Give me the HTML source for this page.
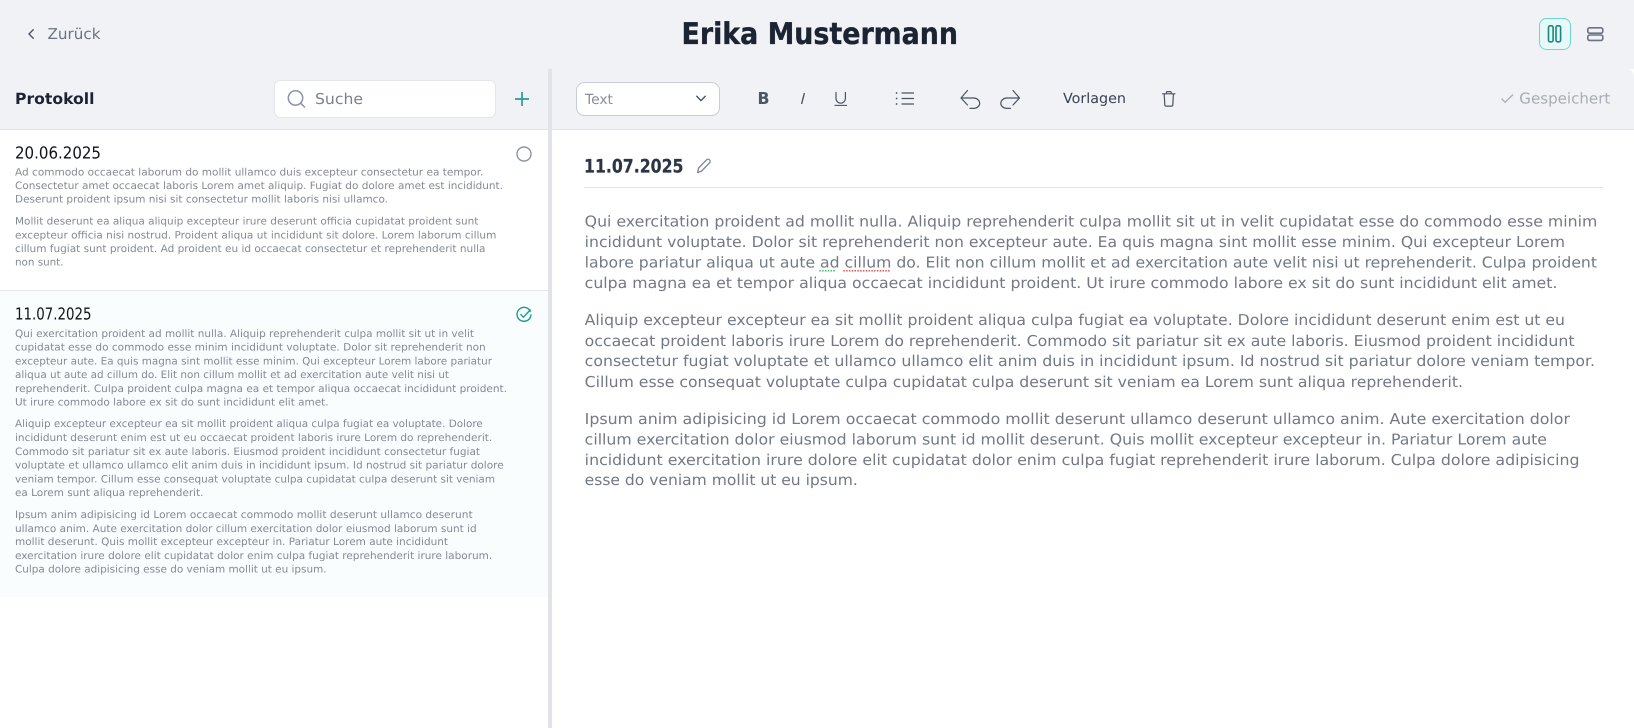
<!DOCTYPE html>
<html lang="de"><head><meta charset="utf-8"><title>Protokoll</title>
<style>
html,body{margin:0;padding:0;background:#f0f2f6;width:1634px;height:728px;overflow:hidden}
svg{display:block}
text{font-family:"DejaVu Sans","Liberation Sans",sans-serif;white-space:pre;text-rendering:geometricPrecision}
.s{font-size:10.2px;fill:#848995}
.m{font-size:15px;fill:#727886}
.d{font-size:16.5px;fill:#111318}
.i{fill:none;stroke:#4b5563;stroke-linecap:round;stroke-linejoin:round}
</style></head><body>
<svg xmlns="http://www.w3.org/2000/svg" width="1634" height="728" viewBox="0 0 1634 728">
<rect width="1634" height="728" fill="#f0f2f6"/>
<!-- panels -->
<rect x="0" y="129" width="548" height="599" fill="#fff"/>
<rect x="552" y="130" width="1082" height="598" fill="#fff"/>
<rect x="0" y="129" width="1634" height="1" fill="#e0e2e7"/>
<rect x="0" y="291" width="548" height="306" fill="#f9fdfe"/>
<rect x="0" y="290" width="548" height="1" fill="#e4e6ea"/>
<rect x="548" y="69" width="4" height="659" fill="#e1e3e8"/>
<path d="M1626 69H1634V77Q1634 69 1626 69Z" fill="#fff"/>

<!-- header -->
<path class="i" d="M33.2 29.8L29 34L33.2 38.2" stroke-width="1.4"/>
<text x="47.5" y="39" font-size="15" fill="#6b7280" textLength="53" lengthAdjust="spacingAndGlyphs">Zurück</text>
<text x="681.5" y="44.2" font-size="30" font-weight="700" fill="#1c2433" stroke="#1c2433" stroke-width=".35" textLength="276.5" lengthAdjust="spacingAndGlyphs">Erika Mustermann</text>
<rect x="1539.5" y="18.5" width="31" height="31" rx="7" fill="#e6f8f7" stroke="#6fd6cc"/>
<rect x="1548.5" y="25.8" width="4.6" height="16" rx="1.6" fill="none" stroke="#16897f" stroke-width="1.6"/>
<rect x="1556" y="25.8" width="4.6" height="16" rx="1.6" fill="none" stroke="#16897f" stroke-width="1.6"/>
<rect x="1587.8" y="27.8" width="15" height="5.4" rx="1.8" fill="none" stroke="#6b7280" stroke-width="1.6"/>
<rect x="1587.8" y="35" width="15" height="5.4" rx="1.8" fill="none" stroke="#6b7280" stroke-width="1.6"/>

<!-- left toolbar -->
<text x="15" y="104" font-size="15.5" font-weight="700" fill="#1c2433" textLength="79.5" lengthAdjust="spacingAndGlyphs">Protokoll</text>
<rect x="274.5" y="80.5" width="221" height="37" rx="6" fill="#fff" stroke="#e2e5ea"/>
<circle cx="295.5" cy="98" r="7.2" fill="none" stroke="#8a94a6" stroke-width="1.5"/>
<path d="M300.8 103.3L304.5 107" stroke="#8a94a6" stroke-width="1.5" stroke-linecap="round"/>
<text x="315" y="104" font-size="15" fill="#7b808c" textLength="48" lengthAdjust="spacingAndGlyphs">Suche</text>
<path d="M522 92V106M515 99H529" stroke="#2b9c94" stroke-width="1.7" fill="none"/>

<!-- item 1 -->
<text class="d" x="15" y="158.7" textLength="86" lengthAdjust="spacingAndGlyphs">20.06.2025</text>
<circle cx="524" cy="154" r="7" fill="none" stroke="#8a94a6" stroke-width="1.4"/>
<g class="s">
<text x="15" y="175.7" textLength="468.4" lengthAdjust="spacingAndGlyphs">Ad commodo occaecat laborum do mollit ullamco duis excepteur consectetur ea tempor.</text>
<text x="15" y="189" textLength="488" lengthAdjust="spacingAndGlyphs">Consectetur amet occaecat laboris Lorem amet aliquip. Fugiat do dolore amet est incididunt.</text>
<text x="15" y="202.7" textLength="373" lengthAdjust="spacingAndGlyphs">Deserunt proident ipsum nisi sit consectetur mollit laboris nisi ullamco.</text>
<text x="15" y="224.7" textLength="463.4" lengthAdjust="spacingAndGlyphs">Mollit deserunt ea aliqua aliquip excepteur irure deserunt officia cupidatat proident sunt</text>
<text x="15" y="238.7" textLength="481.3" lengthAdjust="spacingAndGlyphs">excepteur officia nisi nostrud. Proident aliqua ut incididunt sit dolore. Lorem laborum cillum</text>
<text x="15" y="252" textLength="470.5" lengthAdjust="spacingAndGlyphs">cillum fugiat sunt proident. Ad proident eu id occaecat consectetur et reprehenderit nulla</text>
<text x="15" y="265.7" textLength="48.5" lengthAdjust="spacingAndGlyphs">non sunt.</text>
</g>

<!-- item 2 -->
<text class="d" x="15" y="319.5" textLength="76.5" lengthAdjust="spacingAndGlyphs">11.07.2025</text>
<path d="M530.3 311.2A7 7 0 1 0 531 315" fill="none" stroke="#1c9a8a" stroke-width="1.4" stroke-linecap="round"/>
<path d="M520.9 314.6L523.4 317.2L530.2 310" fill="none" stroke="#1c9a8a" stroke-width="1.4" stroke-linecap="round" stroke-linejoin="round"/>
<g class="s">
<text x="15" y="337" textLength="459" lengthAdjust="spacingAndGlyphs">Qui exercitation proident ad mollit nulla. Aliquip reprehenderit culpa mollit sit ut in velit</text>
<text x="15" y="350.7" textLength="470.7" lengthAdjust="spacingAndGlyphs">cupidatat esse do commodo esse minim incididunt voluptate. Dolor sit reprehenderit non</text>
<text x="15" y="364.3" textLength="477" lengthAdjust="spacingAndGlyphs">excepteur aute. Ea quis magna sint mollit esse minim. Qui excepteur Lorem labore pariatur</text>
<text x="15" y="378" textLength="434" lengthAdjust="spacingAndGlyphs">aliqua ut aute ad cillum do. Elit non cillum mollit et ad exercitation aute velit nisi ut</text>
<text x="15" y="392" textLength="492" lengthAdjust="spacingAndGlyphs">reprehenderit. Culpa proident culpa magna ea et tempor aliqua occaecat incididunt proident.</text>
<text x="15" y="405.7" textLength="313.6" lengthAdjust="spacingAndGlyphs">Ut irure commodo labore ex sit do sunt incididunt elit amet.</text>
<text x="15" y="427" textLength="467.8" lengthAdjust="spacingAndGlyphs">Aliquip excepteur excepteur ea sit mollit proident aliqua culpa fugiat ea voluptate. Dolore</text>
<text x="15" y="441" textLength="477.2" lengthAdjust="spacingAndGlyphs">incididunt deserunt enim est ut eu occaecat proident laboris irure Lorem do reprehenderit.</text>
<text x="15" y="455" textLength="465" lengthAdjust="spacingAndGlyphs">Commodo sit pariatur sit ex aute laboris. Eiusmod proident incididunt consectetur fugiat</text>
<text x="15" y="468.7" textLength="488.7" lengthAdjust="spacingAndGlyphs">voluptate et ullamco ullamco elit anim duis in incididunt ipsum. Id nostrud sit pariatur dolore</text>
<text x="15" y="482.3" textLength="480" lengthAdjust="spacingAndGlyphs">veniam tempor. Cillum esse consequat voluptate culpa cupidatat culpa deserunt sit veniam</text>
<text x="15" y="496" textLength="188.5" lengthAdjust="spacingAndGlyphs">ea Lorem sunt aliqua reprehenderit.</text>
<text x="15" y="518" textLength="457.6" lengthAdjust="spacingAndGlyphs">Ipsum anim adipisicing id Lorem occaecat commodo mollit deserunt ullamco deserunt</text>
<text x="15" y="532" textLength="461.7" lengthAdjust="spacingAndGlyphs">ullamco anim. Aute exercitation dolor cillum exercitation dolor eiusmod laborum sunt id</text>
<text x="15" y="545" textLength="433" lengthAdjust="spacingAndGlyphs">mollit deserunt. Quis mollit excepteur excepteur in. Pariatur Lorem aute incididunt</text>
<text x="15" y="559" textLength="477.2" lengthAdjust="spacingAndGlyphs">exercitation irure dolore elit cupidatat dolor enim culpa fugiat reprehenderit irure laborum.</text>
<text x="15" y="572.7" textLength="311.6" lengthAdjust="spacingAndGlyphs">Culpa dolore adipisicing esse do veniam mollit ut eu ipsum.</text>
</g>

<!-- editor toolbar -->
<rect x="576.5" y="82.5" width="143" height="33" rx="8" fill="#fff" stroke="#c8ccd4"/>
<text x="585" y="104" font-size="14" fill="#8b8f99" textLength="28" lengthAdjust="spacingAndGlyphs">Text</text>
<path class="i" d="M696.8 96.3L701 100.6L705.2 96.3" stroke-width="1.4"/>
<text x="757.5" y="104" font-size="16.5" font-weight="700" fill="#4b5563" textLength="12" lengthAdjust="spacingAndGlyphs">B</text>
<path d="M804.4 93L801.6 104" stroke="#4b5563" stroke-width="1.4" fill="none"/>
<path class="i" d="M836 92.5V98.5A4.7 4.7 0 0 0 845.4 98.5V92.5" stroke-width="1.2"/>
<path d="M834.5 105.4H847" stroke="#4b5563" stroke-width="1.1" fill="none"/>
<path d="M901.5 93H914M901.5 98.5H914M901.5 104H914" stroke="#4b5563" stroke-width="1.3" fill="none"/>
<circle cx="896.6" cy="93" r=".9" fill="#4b5563"/><circle cx="896.6" cy="98.5" r=".9" fill="#4b5563"/><circle cx="896.6" cy="104" r=".9" fill="#4b5563"/>
<path class="i" d="M967.5 105L961 98L967.5 90.5M961 98H973.5A6.2 5.2 0 0 1 973.5 108.4H970" stroke-width="1.2"/>
<path class="i" d="M1013 105L1019.5 98L1013 90.5M1019.5 98H1007A6.2 5.2 0 0 0 1007 108.4H1010.5" stroke-width="1.2"/>
<text x="1063" y="103" font-size="14" fill="#374151" textLength="63" lengthAdjust="spacingAndGlyphs">Vorlagen</text>
<path class="i" d="M1162.5 93.8H1175M1164.2 93.8L1164.8 105A1.2 1.2 0 0 0 1166 106.1H1171.6A1.2 1.2 0 0 0 1172.8 105L1173.4 93.8M1166.4 93.6V92.4A.9.9 0 0 1 1167.3 91.6H1170.3A.9.9 0 0 1 1171.2 92.4V93.6" stroke-width="1.2"/>
<path d="M1501.6 98.6L1505 102.3L1513 94.6" fill="none" stroke="#a8acb5" stroke-width="1.3"/>
<text x="1519.3" y="103.5" font-size="15" fill="#a8acb5" textLength="91" lengthAdjust="spacingAndGlyphs">Gespeichert</text>

<!-- editor -->
<text x="584" y="172.7" font-size="18.5" font-weight="700" fill="#2b3544" stroke="#2b3544" stroke-width=".2" textLength="99.5" lengthAdjust="spacingAndGlyphs">11.07.2025</text>
<path d="M697.6 172.6L698.6 168L706.5 159.9A2.1 2.1 0 0 1 709.6 162.8L701.6 171Z" fill="none" stroke="#7d8799" stroke-width="1.3" stroke-linejoin="round"/>
<rect x="584.5" y="187" width="1018.5" height="1" fill="#e2e4e8"/>
<g class="m">
<text x="584.7" y="226.7" textLength="1012.6" lengthAdjust="spacingAndGlyphs">Qui exercitation proident ad mollit nulla. Aliquip reprehenderit culpa mollit sit ut in velit cupidatat esse do commodo esse minim</text>
<text x="584.7" y="247" textLength="980.3" lengthAdjust="spacingAndGlyphs">incididunt voluptate. Dolor sit reprehenderit non excepteur aute. Ea quis magna sint mollit esse minim. Qui excepteur Lorem</text>
<text x="584.7" y="267.7" textLength="1012.3" lengthAdjust="spacingAndGlyphs">labore pariatur aliqua ut aute ad cillum do. Elit non cillum mollit et ad exercitation aute velit nisi ut reprehenderit. Culpa proident</text>
<text x="584.7" y="288" textLength="972.7" lengthAdjust="spacingAndGlyphs">culpa magna ea et tempor aliqua occaecat incididunt proident. Ut irure commodo labore ex sit do sunt incididunt elit amet.</text>
<text x="584.7" y="325" textLength="980.3" lengthAdjust="spacingAndGlyphs">Aliquip excepteur excepteur ea sit mollit proident aliqua culpa fugiat ea voluptate. Dolore incididunt deserunt enim est ut eu</text>
<text x="584.7" y="345.8" textLength="989.8" lengthAdjust="spacingAndGlyphs">occaecat proident laboris irure Lorem do reprehenderit. Commodo sit pariatur sit ex aute laboris. Eiusmod proident incididunt</text>
<text x="584.7" y="366" textLength="1010.3" lengthAdjust="spacingAndGlyphs">consectetur fugiat voluptate et ullamco ullamco elit anim duis in incididunt ipsum. Id nostrud sit pariatur dolore veniam tempor.</text>
<text x="584.7" y="386.8" textLength="878.3" lengthAdjust="spacingAndGlyphs">Cillum esse consequat voluptate culpa cupidatat culpa deserunt sit veniam ea Lorem sunt aliqua reprehenderit.</text>
<text x="584.7" y="424" textLength="985.3" lengthAdjust="spacingAndGlyphs">Ipsum anim adipisicing id Lorem occaecat commodo mollit deserunt ullamco deserunt ullamco anim. Aute exercitation dolor</text>
<text x="584.7" y="444.4" textLength="962.3" lengthAdjust="spacingAndGlyphs">cillum exercitation dolor eiusmod laborum sunt id mollit deserunt. Quis mollit excepteur excepteur in. Pariatur Lorem aute</text>
<text x="584.7" y="465" textLength="994.9" lengthAdjust="spacingAndGlyphs">incididunt exercitation irure dolore elit cupidatat dolor enim culpa fugiat reprehenderit irure laborum. Culpa dolore adipisicing</text>
<text x="584.7" y="485" textLength="273.1" lengthAdjust="spacingAndGlyphs">esse do veniam mollit ut eu ipsum.</text>
</g>
<path d="M819.3 270.8H836" stroke="#2fb84f" stroke-width="1.3" stroke-dasharray="1.5 1.3" fill="none"/>
<path d="M843.3 270.8H890.7" stroke="#e63f3f" stroke-width="1.3" stroke-dasharray="1.5 1.3" fill="none"/>
</svg>
</body></html>
